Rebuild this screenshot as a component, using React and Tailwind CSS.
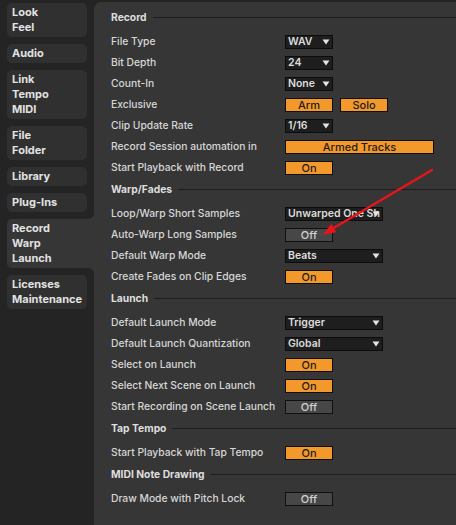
import { Fragment } from 'react'

const tabs = [
  ['Look', 'Feel'],
  ['Audio'],
  ['Link', 'Tempo', 'MIDI'],
  ['File', 'Folder'],
  ['Library'],
  ['Plug-Ins'],
  ['Record', 'Warp', 'Launch'],
  ['Licenses', 'Maintenance'],
]
const ACTIVE = 6

const sections = [
  {
    title: 'Record',
    rows: [
      ['File Type', { type: 'select', value: 'WAV' }],
      ['Bit Depth', { type: 'select', value: '24' }],
      ['Count-In', { type: 'select', value: 'None' }],
      ['Exclusive', { type: 'pair', values: ['Arm', 'Solo'] }],
      ['Clip Update Rate', { type: 'select', value: '1/16' }],
      ['Record Session automation in', { type: 'wide', value: 'Armed Tracks' }],
      ['Start Playback with Record', { type: 'toggle', on: true }],
    ],
  },
  {
    title: 'Warp/Fades',
    rows: [
      ['Loop/Warp Short Samples', { type: 'select', value: 'Unwarped One Sh', wide: true }],
      ['Auto-Warp Long Samples', { type: 'toggle', on: false }],
      ['Default Warp Mode', { type: 'select', value: 'Beats', wide: true }],
      ['Create Fades on Clip Edges', { type: 'toggle', on: true }],
    ],
  },
  {
    title: 'Launch',
    rows: [
      ['Default Launch Mode', { type: 'select', value: 'Trigger', wide: true }],
      ['Default Launch Quantization', { type: 'select', value: 'Global', wide: true }],
      ['Select on Launch', { type: 'toggle', on: true }],
      ['Select Next Scene on Launch', { type: 'toggle', on: true }],
      ['Start Recording on Scene Launch', { type: 'toggle', on: false }],
    ],
  },
  {
    title: 'Tap Tempo',
    rows: [['Start Playback with Tap Tempo', { type: 'toggle', on: true }]],
  },
  {
    title: 'MIDI Note Drawing',
    rows: [['Draw Mode with Pitch Lock', { type: 'toggle', on: false }]],
  },
]

const Caret = () => (
  <svg width="8" height="6" viewBox="0 0 8 6" className="shrink-0">
    <path d="M0.5 0.5 H7.5 L4 5.5 Z" fill="#e4e4e4" />
  </svg>
)

const Select = ({ value, wide }) => (
  <div
    className={`${wide ? 'w-[98px]' : 'w-[48px]'} h-[14px] border border-[#0c0c0c] bg-[#1e1e1e] flex items-center justify-between gap-[1px] pl-[2px] pr-[2px] overflow-hidden`}
  >
    <span className="min-w-0 text-[10.5px] leading-[12px] font-semibold text-[#dcdcdc] whitespace-nowrap">{value}</span>
    <Caret />
  </div>
)

const Button = ({ label, on, className = 'w-[48px]' }) => (
  <div
    className={`${className} h-[14px] border border-[#101010] flex items-center justify-center text-[11px] leading-[12px] ${
      on ? 'bg-[#f3982a] text-[#1c1c1c]' : 'bg-[#474747] text-[#d2d2d2]'
    }`}
  >
    {label}
  </div>
)

const Control = ({ c }) => {
  if (c.type === 'select') return <Select value={c.value} wide={c.wide} />
  if (c.type === 'pair')
    return (
      <div className="flex gap-[7px]">
        {c.values.map((v) => (
          <Button key={v} label={v} on />
        ))}
      </div>
    )
  if (c.type === 'wide') return <Button label={c.value} on className="w-[149px]" />
  return <Button label={c.on ? 'On' : 'Off'} on={c.on} />
}

const Tab = ({ lines, active }) => {
  if (active) {
    return (
      <div className="relative w-[87px] bg-[#363636] rounded-l-[5px] px-[5px] py-[2px]">
        {/* concave corners joining the panel */}
        <div className="absolute -top-[6px] right-0 w-[6px] h-[6px] bg-[#363636]">
          <div className="w-full h-full bg-[#242424] rounded-br-[6px]" />
        </div>
        <div className="absolute -bottom-[6px] right-0 w-[6px] h-[6px] bg-[#363636]">
          <div className="w-full h-full bg-[#242424] rounded-tr-[6px]" />
        </div>
        {lines.map((l) => (
          <div key={l}>{l}</div>
        ))}
      </div>
    )
  }
  return (
    <div className="w-[80px] bg-[#303030] rounded-[5px] px-[5px] py-[2px]">
      {lines.map((l) => (
        <div key={l}>{l}</div>
      ))}
    </div>
  )
}

export default function App() {
  return (
    <div
      className="relative w-full h-[525px] bg-[#242424] flex overflow-hidden"
      style={{ fontFamily: 'Inter, "Noto Sans", sans-serif' }}
    >
      {/* Tabs */}
      <div className="w-[94px] shrink-0 pt-[3px] pl-[7px] flex flex-col gap-[7px] text-[11px] leading-[15px] font-bold text-[#e2e2e2]">
        {tabs.map((t, i) => (
          <Tab key={t[0]} lines={t} active={i === ACTIVE} />
        ))}
      </div>

      {/* Panel */}
      <div className="flex-1 mt-[2px] bg-[#363636] rounded-tl-[7px] pl-[17px] pt-[4px] text-[10.3px] font-medium text-[#d6d6d6]">
        {sections.map((s) => (
          <Fragment key={s.title}>
            <div className="flex items-center h-[15px] mt-[4px] mb-[6px] gap-[6px]">
              <span className="font-bold text-[#dedede] whitespace-nowrap">{s.title}</span>
              <div className="flex-1 h-px bg-[#1c1c1c]" />
            </div>
            {s.rows.map(([label, c]) => (
              <div key={label} className="flex items-center h-[21px]">
                <div className="w-[174px] shrink-0 whitespace-nowrap">{label}</div>
                <Control c={c} />
              </div>
            ))}
          </Fragment>
        ))}
      </div>

      {/* Red annotation arrow */}
      <svg className="absolute inset-0 pointer-events-none" width="456" height="525" viewBox="0 0 456 525">
        <line x1="432" y1="170" x2="332" y2="229" stroke="#e8141a" strokeWidth="2.4" strokeLinecap="round" />
        <path d="M322.7 234.7 L336.4 232.3 L331.4 223.8 Z" fill="#e8141a" />
      </svg>
    </div>
  )
}
